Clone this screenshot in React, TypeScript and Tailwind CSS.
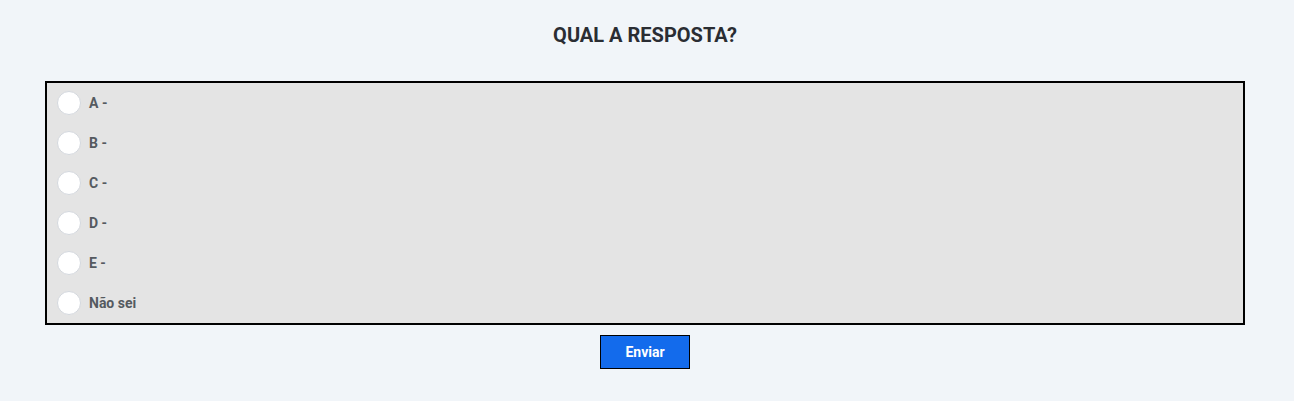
import React from "react";

const options = ["A -", "B -", "C -", "D -", "E -", "Não sei"];

const App: React.FC = () => {
  return (
    <div className="min-h-[401px] bg-[#f1f5f9] font-['Roboto',_'Liberation_Sans',_sans-serif]">
      <div className="w-[1290px] pt-[21px] flex flex-col items-center">
        <h1 className="text-[20px] leading-7 font-bold text-[#2a2d33]">
          QUAL A RESPOSTA?
        </h1>
        <div className="mt-8 w-[1200px] border-2 border-black bg-[#e4e4e4]">
          {options.map((opt) => (
            <label key={opt} className="h-10 flex items-center pl-[10px] cursor-pointer">
              <span className="w-6 h-6 rounded-full bg-white border border-[#d4d8de]" />
              <span className="ml-2 text-sm font-bold text-[#555a60]">{opt}</span>
            </label>
          ))}
        </div>
        <button className="mt-[10px] w-[90px] h-[34px] bg-[#136bec] border border-black text-white text-sm font-bold">
          Enviar
        </button>
      </div>
    </div>
  );
};

export default App;
